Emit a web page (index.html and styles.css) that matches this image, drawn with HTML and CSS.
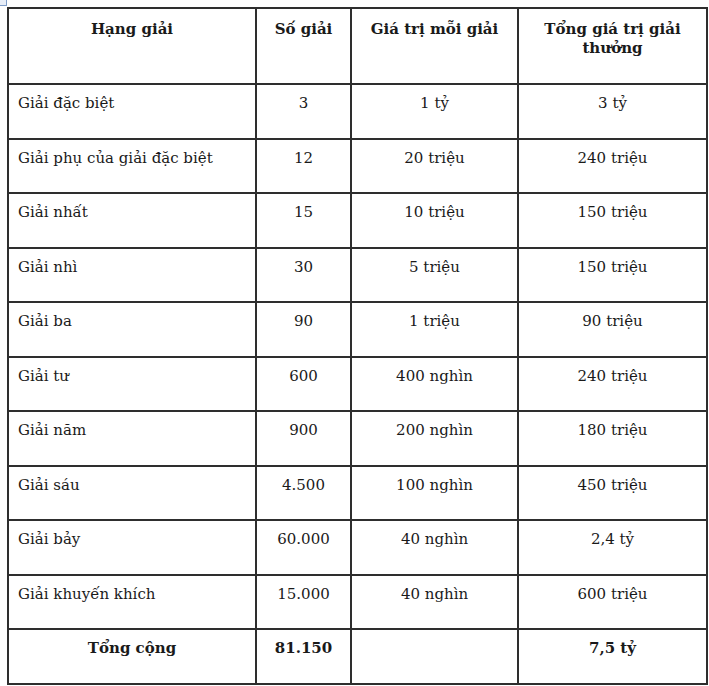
FILE: index.html
```html
<!DOCTYPE html>
<html lang="vi">
<head>
<meta charset="utf-8">
<title>Cơ cấu giải thưởng</title>
<link rel="stylesheet" href="styles.css">
</head>
<body>
<div class="handle"></div>
<table class="prize">
  <colgroup>
    <col class="c1"><col class="c2"><col class="c3"><col class="c4">
  </colgroup>
  <tr class="head">
    <th>Hạng giải</th>
    <th>Số giải</th>
    <th>Giá trị mỗi giải</th>
    <th>Tổng giá trị giải<br>thưởng</th>
  </tr>
  <tr><td class="name">Giải đặc biệt</td><td>3</td><td>1 tỷ</td><td>3 tỷ</td></tr>
  <tr><td class="name">Giải phụ của giải đặc biệt</td><td>12</td><td>20 triệu</td><td>240 triệu</td></tr>
  <tr><td class="name">Giải nhất</td><td>15</td><td>10 triệu</td><td>150 triệu</td></tr>
  <tr><td class="name">Giải nhì</td><td>30</td><td>5 triệu</td><td>150 triệu</td></tr>
  <tr><td class="name">Giải ba</td><td>90</td><td>1 triệu</td><td>90 triệu</td></tr>
  <tr><td class="name">Giải tư</td><td>600</td><td>400 nghìn</td><td>240 triệu</td></tr>
  <tr><td class="name">Giải năm</td><td>900</td><td>200 nghìn</td><td>180 triệu</td></tr>
  <tr><td class="name">Giải sáu</td><td>4.500</td><td>100 nghìn</td><td>450 triệu</td></tr>
  <tr><td class="name">Giải bảy</td><td>60.000</td><td>40 nghìn</td><td>2,4 tỷ</td></tr>
  <tr><td class="name">Giải khuyến khích</td><td>15.000</td><td>40 nghìn</td><td>600 triệu</td></tr>
  <tr class="total"><td>Tổng cộng</td><td>81.150</td><td></td><td>7,5 tỷ</td></tr>
</table>
</body>
</html>
```

FILE: styles.css
```css
html, body {
  margin: 0;
  padding: 0;
  background: #fff;
}
body {
  padding: 7px 0 0 7px;
  font-family: "DejaVu Serif", "Liberation Serif", serif;
  color: #1a1a1a;
  position: relative;
}
.handle {
  position: absolute;
  left: 0;
  top: 0;
  width: 6px;
  height: 5px;
  border: 1px solid #7e9cc8;
  border-left: none;
  border-top: none;
  background: #e8eef8;
}
.prize {
  border-collapse: collapse;
  table-layout: fixed;
  width: 699px;
  font-size: 15px;
  line-height: 19px;
}
.c1 { width: 248px; }
.c2 { width: 95px; }
.c3 { width: 167px; }
.c4 { width: 189px; }
.prize tr {
  height: 54.5px;
}
.prize tr.head {
  height: 76px;
}
.prize th, .prize td {
  border: 2px solid #2e2e2e;
  vertical-align: top;
  text-align: center;
  padding: 9px 4px 0 4px;
}
.prize th {
  font-weight: bold;
  padding-top: 11px;
}
.prize td.name {
  text-align: left;
  padding-left: 9px;
}
.total td {
  font-weight: bold;
}
```
